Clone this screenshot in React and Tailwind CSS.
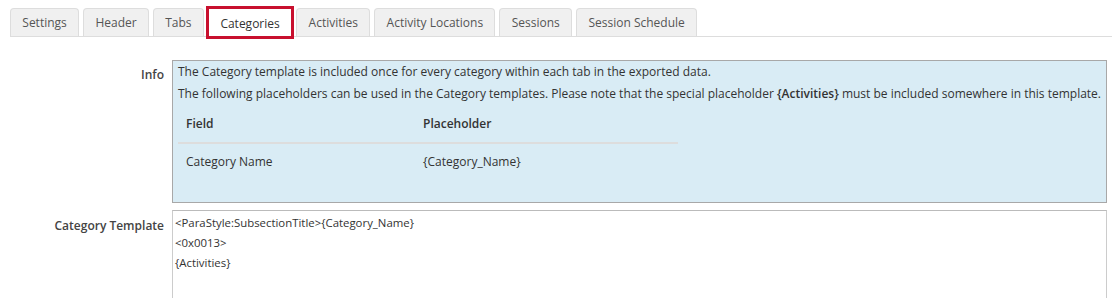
const tabs = ['Settings', 'Header', 'Tabs', 'Categories', 'Activities', 'Activity Locations', 'Sessions', 'Session Schedule'];

export default function App() {
    const active = 'Categories';

    return (
        <div className="min-h-[298px] bg-white pt-[8px] pr-[11px] pl-[10px] text-[12px] text-[#333] [font-family:'Open_Sans',Arial,sans-serif]">
            <div className="mr-[-5px] flex gap-[4px] border-b border-[#dddddd]">
                {tabs.map((t) =>
                    t === active ? (
                        <div
                            key={t}
                            className="relative z-10 -mb-px flex h-[29px] items-center border border-b-0 border-white bg-white px-[11.5px] pt-px text-[#333] outline-[3px] outline-[#c8102e] outline-solid -outline-offset-1"
                        >
                            {t}
                        </div>
                    ) : (
                        <div
                            key={t}
                            className="flex h-[28px] items-center rounded-t-[4px] border border-b-0 border-[#dddddd] bg-[#f0f0f0] px-[11.3px] pt-px text-[#555]"
                        >
                            {t}
                        </div>
                    )
                )}
            </div>

            <div className="mt-[23px] flex gap-[8px]">
                <div className="w-[154px] shrink-0 pt-[5px] text-right leading-5 font-semibold text-[#444]">Info</div>
                <div className="flex-1 border border-[#a8a8a8] bg-[#d9ecf5] px-[5px] pt-[1px] pb-[22px]">
                    <p className="mb-[2px] leading-5">The Category template is included once for every category within each tab in the exported data.</p>
                    <p className="leading-5">
                        The following placeholders can be used in the Category templates. Please note that the special placeholder{' '}
                        <span className="font-semibold">{'{Activities}'}</span> must be included somewhere in this template.
                    </p>
                    <table className="mt-[2px] w-[500px] border-collapse text-left">
                        <thead>
                            <tr className="border-b-2 border-[#dddddd]">
                                <th className="w-[237px] px-[8px] py-[8px] leading-5 font-semibold">Field</th>
                                <th className="px-[8px] py-[8px] leading-5 font-semibold">Placeholder</th>
                            </tr>
                        </thead>
                        <tbody>
                            <tr>
                                <td className="px-[8px] py-[8px] leading-5">Category Name</td>
                                <td className="px-[8px] py-[8px] leading-5">{'{Category_Name}'}</td>
                            </tr>
                        </tbody>
                    </table>
                </div>
            </div>

            <div className="mt-[7px] flex gap-[8px]">
                <div className="w-[154px] shrink-0 pt-[6px] text-right leading-5 font-semibold text-[#444]">Category Template</div>
                <textarea
                    readOnly
                    className="h-[100px] flex-1 resize-none border border-[#cccccc] border-t-[#bbbbbb] px-[2px] pt-[2px] text-[11.4px] leading-5 text-[#333] outline-none"
                    defaultValue={'<ParaStyle:SubsectionTitle>{Category_Name}\n<0x0013>\n{Activities}'}
                />
            </div>
        </div>
    );
}
